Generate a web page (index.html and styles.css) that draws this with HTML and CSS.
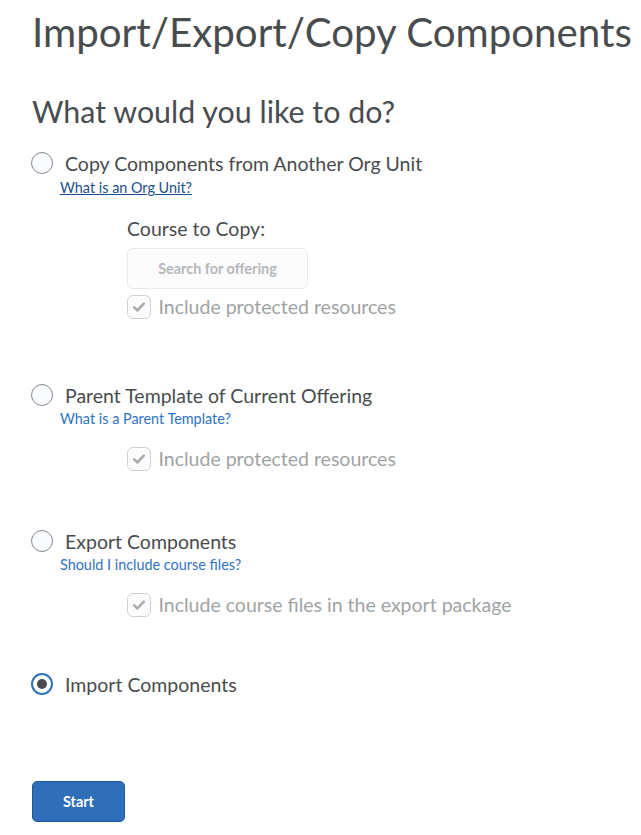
FILE: index.html
```html
<!DOCTYPE html>
<html>
<head>
<meta charset="utf-8">
<link rel="stylesheet" href="styles.css">
</head>
<body>
<main class="page">
  <h1 class="title">Import/Export/Copy Components</h1>
  <h2 class="subtitle">What would you like to do?</h2>

  <section class="option opt-copy">
    <label class="radio-row"><span class="radio"></span><span class="radio-label">Copy Components from Another Org Unit</span></label>
    <a class="help help-visited" href="#">What is an Org Unit?</a>
    <div class="sub">
      <div class="field-label">Course to Copy:</div>
      <div class="search">Search for offering</div>
      <label class="check-row"><span class="check"><svg viewBox="0 0 24 24" width="24" height="24"><path d="M6.8 12.4l3.5 3.4 7-7.4" fill="none" stroke="#a9acaf" stroke-width="2.8" stroke-linecap="round" stroke-linejoin="round"/></svg></span><span class="check-label">Include protected resources</span></label>
    </div>
  </section>

  <section class="option opt-parent">
    <label class="radio-row"><span class="radio"></span><span class="radio-label">Parent Template of Current Offering</span></label>
    <a class="help help-tight" href="#">What is a Parent Template?</a>
    <div class="sub sub-tight">
      <label class="check-row"><span class="check"><svg viewBox="0 0 24 24" width="24" height="24"><path d="M6.8 12.4l3.5 3.4 7-7.4" fill="none" stroke="#a9acaf" stroke-width="2.8" stroke-linecap="round" stroke-linejoin="round"/></svg></span><span class="check-label">Include protected resources</span></label>
    </div>
  </section>

  <section class="option opt-export">
    <label class="radio-row"><span class="radio"></span><span class="radio-label">Export Components</span></label>
    <a class="help help-tight" href="#">Should I include course files?</a>
    <div class="sub sub-tight">
      <label class="check-row"><span class="check"><svg viewBox="0 0 24 24" width="24" height="24"><path d="M6.8 12.4l3.5 3.4 7-7.4" fill="none" stroke="#a9acaf" stroke-width="2.8" stroke-linecap="round" stroke-linejoin="round"/></svg></span><span class="check-label">Include course files in the export package</span></label>
    </div>
  </section>

  <section class="option opt-import">
    <label class="radio-row"><span class="radio radio-on"><span class="dot"></span></span><span class="radio-label">Import Components</span></label>
  </section>

  <button class="start" type="button">Start</button>
</main>
</body>
</html>
```

FILE: styles.css
```css
html, body {
  margin: 0;
  padding: 0;
  background: #ffffff;
}
body {
  font-family: Lato, "Open Sans", sans-serif;
  color: #494c4e;
}
.page {
  padding: 0 0 0 32px;
  display: flex;
  flex-direction: column;
  align-items: flex-start;
}
.title {
  margin: 7.5px 0 0 0;
  font-size: 40.3px;
  font-weight: 400;
  line-height: 48px;
  white-space: nowrap;
  color: #494c4e;
}
.subtitle {
  margin: 37.5px 0 0 0;
  font-size: 30.4px;
  font-weight: 400;
  line-height: 36px;
  color: #494c4e;
}
.option {
  display: flex;
  flex-direction: column;
  align-items: flex-start;
}
.opt-copy { margin-top: 20px; }
.opt-parent { margin-top: 61px; }
.opt-export { margin-top: 55px; }
.opt-import { margin-top: 52px; }

.radio-row {
  display: flex;
  align-items: center;
  gap: 12px;
  height: 28px;
}
.radio {
  box-sizing: border-box;
  width: 22px;
  height: 22px;
  margin-left: -1px;
  border-radius: 50%;
  border: 1px solid #878b8e;
  background: #f9fbff;
  display: flex;
  align-items: center;
  justify-content: center;
}
.radio-on {
  border: 2px solid #2f73b9;
  background: #ffffff;
}
.dot {
  width: 10px;
  height: 10px;
  border-radius: 50%;
  background: #494c4e;
}
.radio-label {
  font-size: 19.5px;
  line-height: 28px;
  padding-top: 2px;
  color: #494c4e;
}
.help {
  margin-left: 28px;
  margin-top: 2px;
  font-size: 14.4px;
  line-height: 18px;
  color: #2f73c4;
  text-decoration: none;
}
.help-tight { margin-top: 0.5px; }
.help-visited {
  color: #1c4f8c;
  text-decoration: underline;
}
.sub {
  margin-left: 95px;
  margin-top: 19px;
  display: flex;
  flex-direction: column;
  align-items: flex-start;
}
.sub-tight { margin-top: 18.5px; }
.field-label {
  font-size: 19.5px;
  line-height: 26px;
  color: #494c4e;
}
.search {
  box-sizing: border-box;
  margin-top: 6px;
  width: 181px;
  height: 41px;
  border: 1px solid #e6eaf0;
  border-radius: 6px;
  background: #fcfcfd;
  display: flex;
  align-items: center;
  justify-content: center;
  font-size: 14.4px;
  font-weight: 700;
  color: #b5b8bb;
}
.check-row {
  display: flex;
  align-items: center;
  gap: 8px;
  height: 26px;
  margin-top: 5px;
  margin-left: -0.5px;
}
.sub-tight .check-row { margin-top: 0; }
.check {
  box-sizing: border-box;
  width: 24px;
  height: 24px;
  border: 1px solid #cfd2d5;
  border-radius: 6px;
  background: #fcfcfd;
  display: flex;
  align-items: center;
  justify-content: center;
}
.check svg { display: block; }
.check-label {
  font-size: 19.5px;
  line-height: 26px;
  color: #a0a3a5;
}
.start {
  margin-top: 83px;
  box-sizing: border-box;
  width: 93px;
  height: 41px;
  border: 1px solid #225a99;
  border-radius: 5px;
  background: #2f6fba;
  color: #ffffff;
  font-family: Lato, "Open Sans", sans-serif;
  font-size: 14.4px;
  font-weight: 700;
  padding: 0;
  cursor: pointer;
}
```
